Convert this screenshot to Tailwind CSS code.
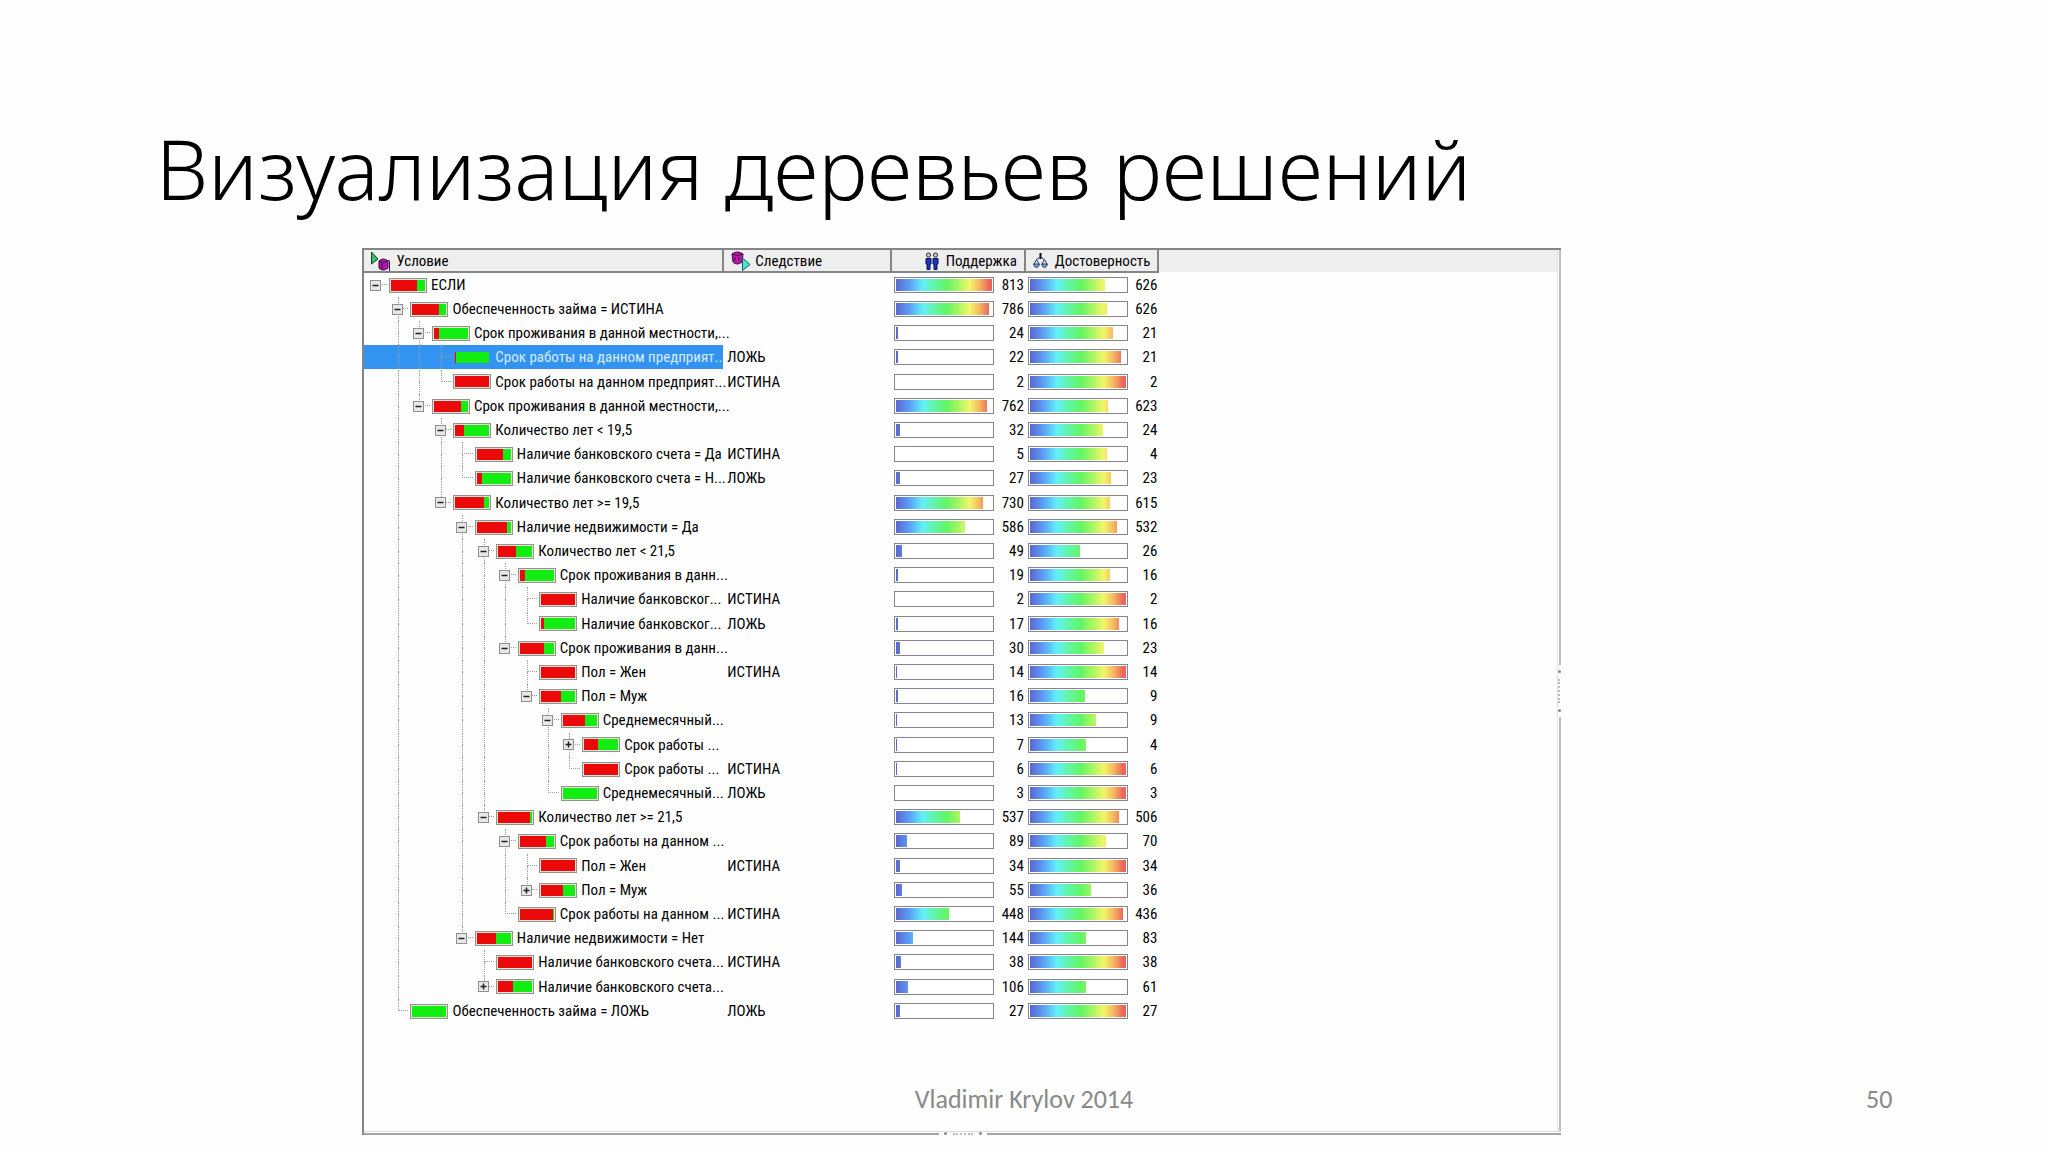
<!DOCTYPE html>
<html lang="ru">
<head>
  <meta charset="UTF-8">
  <meta name="viewport" content="width=device-width, initial-scale=1.0">
  <title>Визуализация деревьев решений</title>
  <script src="https://cdn.jsdelivr.net/npm/@tailwindcss/browser@4"></script>
</head>
<body class="bg-[#fefefe]">
  <main class="relative flex min-h-screen flex-col pt-[126px] pb-[17px] text-black">
    <h1 class="mb-[39px] pl-[7.6%] font-['Noto_Sans',sans-serif] text-[83px] leading-none font-light whitespace-nowrap">Визуализация деревьев решений</h1>

    <section class="ml-[17.7%] grid w-[58.5%] flex-1 grid-cols-[1fr_4px] grid-rows-[1fr_4px] border-t-2 border-l-2 border-[#858585] font-['Roboto_Condensed','Liberation_Sans_Narrow','Liberation_Sans',sans-serif] text-[15px] leading-5">
      <div>
        <table class="w-full table-fixed border-collapse">
          <colgroup>
            <col class="w-[30.1%]">
            <col class="w-[14.1%]">
            <col class="w-[11.2%]">
            <col class="w-[11.2%]">
            <col>
          </colgroup>
          <thead class="bg-[#eeeeee]">
            <tr class="h-[22px]">
              <th class="border-r-2 border-b-2 border-[#858585] p-0 font-normal">
                <div class="flex h-5 items-center gap-[6px] pt-px pl-[6px]">
                  <svg class="h-5 w-5" viewBox="0 0 20 20">
                    <path d="M1.500 1 L1.500 13 L8 8 Z" fill="#35c060" stroke="#14401f"/>
                    <path d="M9 10 Q13 6 18 10 L18 17 Q13 21 9 17 Z" fill="#b516b0" stroke="#3a0640"/>
                    <path d="M9 10 Q13 13 18 10 M12 12 V18 M18 9 L19.500 10 V20" fill="none" stroke="#3a0640"/>
                  </svg>
                  Условие
                </div>
              </th>
              <th class="border-r-2 border-b-2 border-[#858585] p-0 font-normal">
                <div class="flex h-5 items-center gap-1 pt-px pl-[7px]">
                  <svg class="h-5 w-5" viewBox="0 0 20 20">
                    <path d="M1 3 Q6 -1 12 3 L11 11 Q6 15 2 11 Z" fill="#c01aa8" stroke="#3a0640"/>
                    <path d="M1 3 Q6 6 12 3 M4 6 V10 M8 6 V10" fill="none" stroke="#3a0640"/>
                    <path d="M11.500 7 L19 13.500 L11.500 19.500 Z" fill="#4fe0cf" stroke="#16605c"/>
                  </svg>
                  Следствие
                </div>
              </th>
              <th class="border-r-2 border-b-2 border-[#858585] p-0 font-normal">
                <div class="flex h-5 items-center justify-end gap-[7px] pt-px pr-[7px]">
                  <svg class="h-[18px] w-[14px]" viewBox="0 0 14 18">
                    <path d="M1 6.500 H6 V12 H5 V17.500 H2 V12 H1 Z M8 6.500 H13 V12 H12 V17.500 H9 V12 H8 Z" fill="#1a35c0" stroke="#07104f"/>
                    <circle cx="3.500" cy="3" r="2" fill="#d8d8d8" stroke="#222"/>
                    <circle cx="10.500" cy="3" r="2" fill="#d8d8d8" stroke="#222"/>
                  </svg>
                  Поддержка
                </div>
              </th>
              <th class="border-r-2 border-b-2 border-[#858585] p-0 font-normal">
                <div class="flex h-5 items-center justify-end gap-[7px] pt-px pr-[7px]">
                  <svg class="h-4 w-[15px]" viewBox="0 0 15 16" fill="none" stroke="#26375c">
                    <path d="M7.500 0 V6" stroke="#111" stroke-width="2"/>
                    <path d="M3.500 6.500 L7.500 4 L11.500 6.500 M3.500 6.500 L1 11 M3.500 6.500 L6 11 M11.500 6.500 L9 11 M11.500 6.500 L14 11"/>
                    <path d="M0.500 11 H6.500 Q5.500 14.500 3.500 14.500 Q1.500 14.500 0.500 11 Z M8.500 11 H14.500 Q13.500 14.500 11.500 14.500 Q9.500 14.500 8.500 11 Z" fill="#7fa8e8"/>
                  </svg>
                  Достоверность
                </div>
              </th>
              <th></th>
            </tr>
          </thead>
          <tbody id="tree"></tbody>
        </table>
      </div>

      <!-- right splitter -->
      <div class="flex flex-col items-end border-l border-[#e2e2e2]">
        <div class="w-[2px] grow-10 bg-[#bdbdbd]"></div>
        <div class="flex h-[52px] flex-col items-center justify-center gap-[6px]">
          <span class="size-[3px] rounded-full bg-[#888]"></span>
          <span class="h-6 border-l-2 border-dotted border-[#bbb]"></span>
          <span class="size-[3px] rounded-full bg-[#888]"></span>
        </div>
        <div class="w-[2px] grow-10 bg-[#bdbdbd]"></div>
      </div>

      <!-- bottom splitter -->
      <div class="col-span-2 flex items-end border-t border-[#dcdcdc]">
        <div class="h-[2px] flex-1 bg-[#a5a5a5]"></div>
        <div class="flex h-[3px] w-12 items-center justify-center gap-[6px]">
          <span class="size-[3px] rounded-full bg-[#888]"></span>
          <span class="w-5 border-t-2 border-dotted border-[#bbb]"></span>
          <span class="size-[3px] rounded-full bg-[#888]"></span>
        </div>
        <div class="h-[2px] flex-1 bg-[#a5a5a5]"></div>
      </div>
    </section>

    <footer class="absolute inset-x-0 bottom-[37px] grid grid-cols-3 px-[7.6%] font-['Carlito','Lato',sans-serif] text-[26px] leading-8 text-[#898989]">
      <span class="col-start-2 text-center">Vladimir Krylov 2014</span>
      <span class="text-right">50</span>
    </footer>
  </main>

  <script>
    // depth, toggle, red %, condition, result, support, bar %, confidence, bar %
    const rows = [
      [0, '-', 77, 'ЕСЛИ', '', 813, 100, 626, 78],
      [1, '-', 78, 'Обеспеченность займа = ИСТИНА', '', 786, 96, 626, 80],
      [2, '-', 15, 'Срок проживания в данной местности,...', '', 24, 2, 21, 87],
      [3, '', 3, 'Срок работы на данном предприят...', 'ЛОЖЬ', 22, 2, 21, 95],
      [3, '', 100, 'Срок работы на данном предприят...', 'ИСТИНА', 2, 0, 2, 100],
      [2, '-', 80, 'Срок проживания в данной местности,...', '', 762, 94, 623, 81],
      [3, '-', 24, 'Количество лет < 19,5', '', 32, 4, 24, 76],
      [4, '', 76, 'Наличие банковского счета = Да', 'ИСТИНА', 5, 0, 4, 80],
      [4, '', 14, 'Наличие банковского счета = Н...', 'ЛОЖЬ', 27, 4, 23, 85],
      [3, '-', 83, 'Количество лет >= 19,5', '', 730, 90, 615, 83],
      [4, '-', 88, 'Наличие недвижимости = Да', '', 586, 72, 532, 91],
      [5, '-', 52, 'Количество лет < 21,5', '', 49, 6, 26, 52],
      [6, '-', 14, 'Срок проживания в данн...', '', 19, 2, 16, 83],
      [7, '', 100, 'Наличие банковског...', 'ИСТИНА', 2, 0, 2, 100],
      [7, '', 7, 'Наличие банковског...', 'ЛОЖЬ', 17, 2, 16, 93],
      [6, '-', 72, 'Срок проживания в данн...', '', 30, 4, 23, 77],
      [7, '', 100, 'Пол = Жен', 'ИСТИНА', 14, 1, 14, 100],
      [7, '-', 57, 'Пол = Муж', '', 16, 2, 9, 57],
      [8, '-', 67, 'Среднемесячный...', '', 13, 1, 9, 69],
      [9, '+', 42, 'Срок работы ...', '', 7, 1, 4, 58],
      [9, '', 100, 'Срок работы ...', 'ИСТИНА', 6, 1, 6, 100],
      [8, '', 0, 'Среднемесячный...', 'ЛОЖЬ', 3, 0, 3, 100],
      [5, '-', 93, 'Количество лет >= 21,5', '', 537, 66, 506, 93],
      [6, '-', 78, 'Срок работы на данном ...', '', 89, 11, 70, 79],
      [7, '', 100, 'Пол = Жен', 'ИСТИНА', 34, 4, 34, 100],
      [7, '+', 63, 'Пол = Муж', '', 55, 6, 36, 64],
      [6, '', 97, 'Срок работы на данном ...', 'ИСТИНА', 448, 55, 436, 97],
      [4, '-', 57, 'Наличие недвижимости = Нет', '', 144, 17, 83, 58],
      [5, '', 100, 'Наличие банковского счета...', 'ИСТИНА', 38, 5, 38, 100],
      [5, '+', 42, 'Наличие банковского счета...', '', 106, 12, 61, 58],
      [1, '', 0, 'Обеспеченность займа = ЛОЖЬ', 'ЛОЖЬ', 27, 4, 27, 100],
    ];
    const selected = 3;

    // is there another node on this level below row i, under the same parent?
    function hasNext(i, depth) {
      for (let j = i + 1; j < rows.length; j++) {
        if (rows[j][0] < depth) return false;
        if (rows[j][0] === depth) return true;
      }
      return false;
    }

    function toggle(sign) {
      if (!sign) return '';
      const plus = sign === '+' ? ' M4.5 1.500 V7.500' : '';
      return `<button type="button" aria-label="${sign === '+' ? 'Развернуть' : 'Свернуть'}" class="col-span-2 col-start-1 row-span-2 row-start-1 mr-px size-[11px] place-self-center border border-[#8f8f8f] bg-[#e8e8e8]">
        <svg class="size-[9px]" viewBox="0 0 9 9"><path d="M1.500 4.500 H7.500${plus}" stroke="#222" stroke-width="1.500" fill="none"/></svg>
      </button>`;
    }

    function slots(i, depth, sign) {
      let html = '';
      for (let d = 0; d <= depth; d++) {
        const next = d > 0 && hasNext(i, d);
        const own = d === depth;
        const up = d > 0 && (own || next) ? 'border-l' : '';
        const across = own ? 'border-b' : '';
        html += `<span class="grid h-6 w-[6%] shrink-0 grid-cols-2 grid-rows-2">
          <span class="col-start-2 row-start-1 border-dotted border-[#a0a0a0] ${up} ${across}"></span>
          <span class="col-start-2 row-start-2 border-dotted border-[#a0a0a0] ${next ? 'border-l' : ''}"></span>
          ${own ? toggle(sign) : ''}
        </span>`;
      }
      return html;
    }

    function bar(value, width) {
      return `<td class="p-0"><div class="flex items-center justify-between pr-px pl-[3px]">
        <span class="h-4 w-[100px] border border-[#85858f] bg-white p-px">
          <span class="block h-3 bg-[linear-gradient(90deg,#5b66d0,#5ba0f5_14%,#62f0f8_28%,#62f5a8_40%,#62f562_53%,#a8f562_65%,#f3f568_77%,#f5b860_87%,#ec645c_97%)] bg-[length:96px_100%] bg-no-repeat" style="width:${width}%"></span>
        </span>
        <span>${value}</span>
      </div></td>`;
    }

    document.getElementById('tree').innerHTML = rows.map(([depth, sign, red, text, result, sup, supBar, conf, confBar], i) => {
      const on = i === selected;
      return `<tr class="h-6 nth-[5n]:h-[25px]">
        <td class="p-0 ${on ? 'bg-[#3393f0] text-[#d5ecff]' : ''}"><div class="flex h-6 items-center pl-px whitespace-nowrap">
          ${slots(i, depth, sign)}
          <span class="mr-1 ml-[2px] h-[15px] w-[38px] shrink-0 border p-px ${on ? 'border-transparent' : 'border-[#8a9a8a] bg-[#f0dcd8]'}">
            <span class="flex h-[11px] bg-[#12ee12]"><span class="bg-[#ea0a0a]" style="width:${red}%"></span></span>
          </span>
          <span>${text.replace('<', '&lt;').replace('>', '&gt;')}</span>
        </div></td>
        <td class="p-0 pl-1">${result}</td>
        ${bar(sup, supBar)}
        ${bar(conf, confBar)}
        <td class="p-0"></td>
      </tr>`;
    }).join('');
  </script>
</body>
</html>
